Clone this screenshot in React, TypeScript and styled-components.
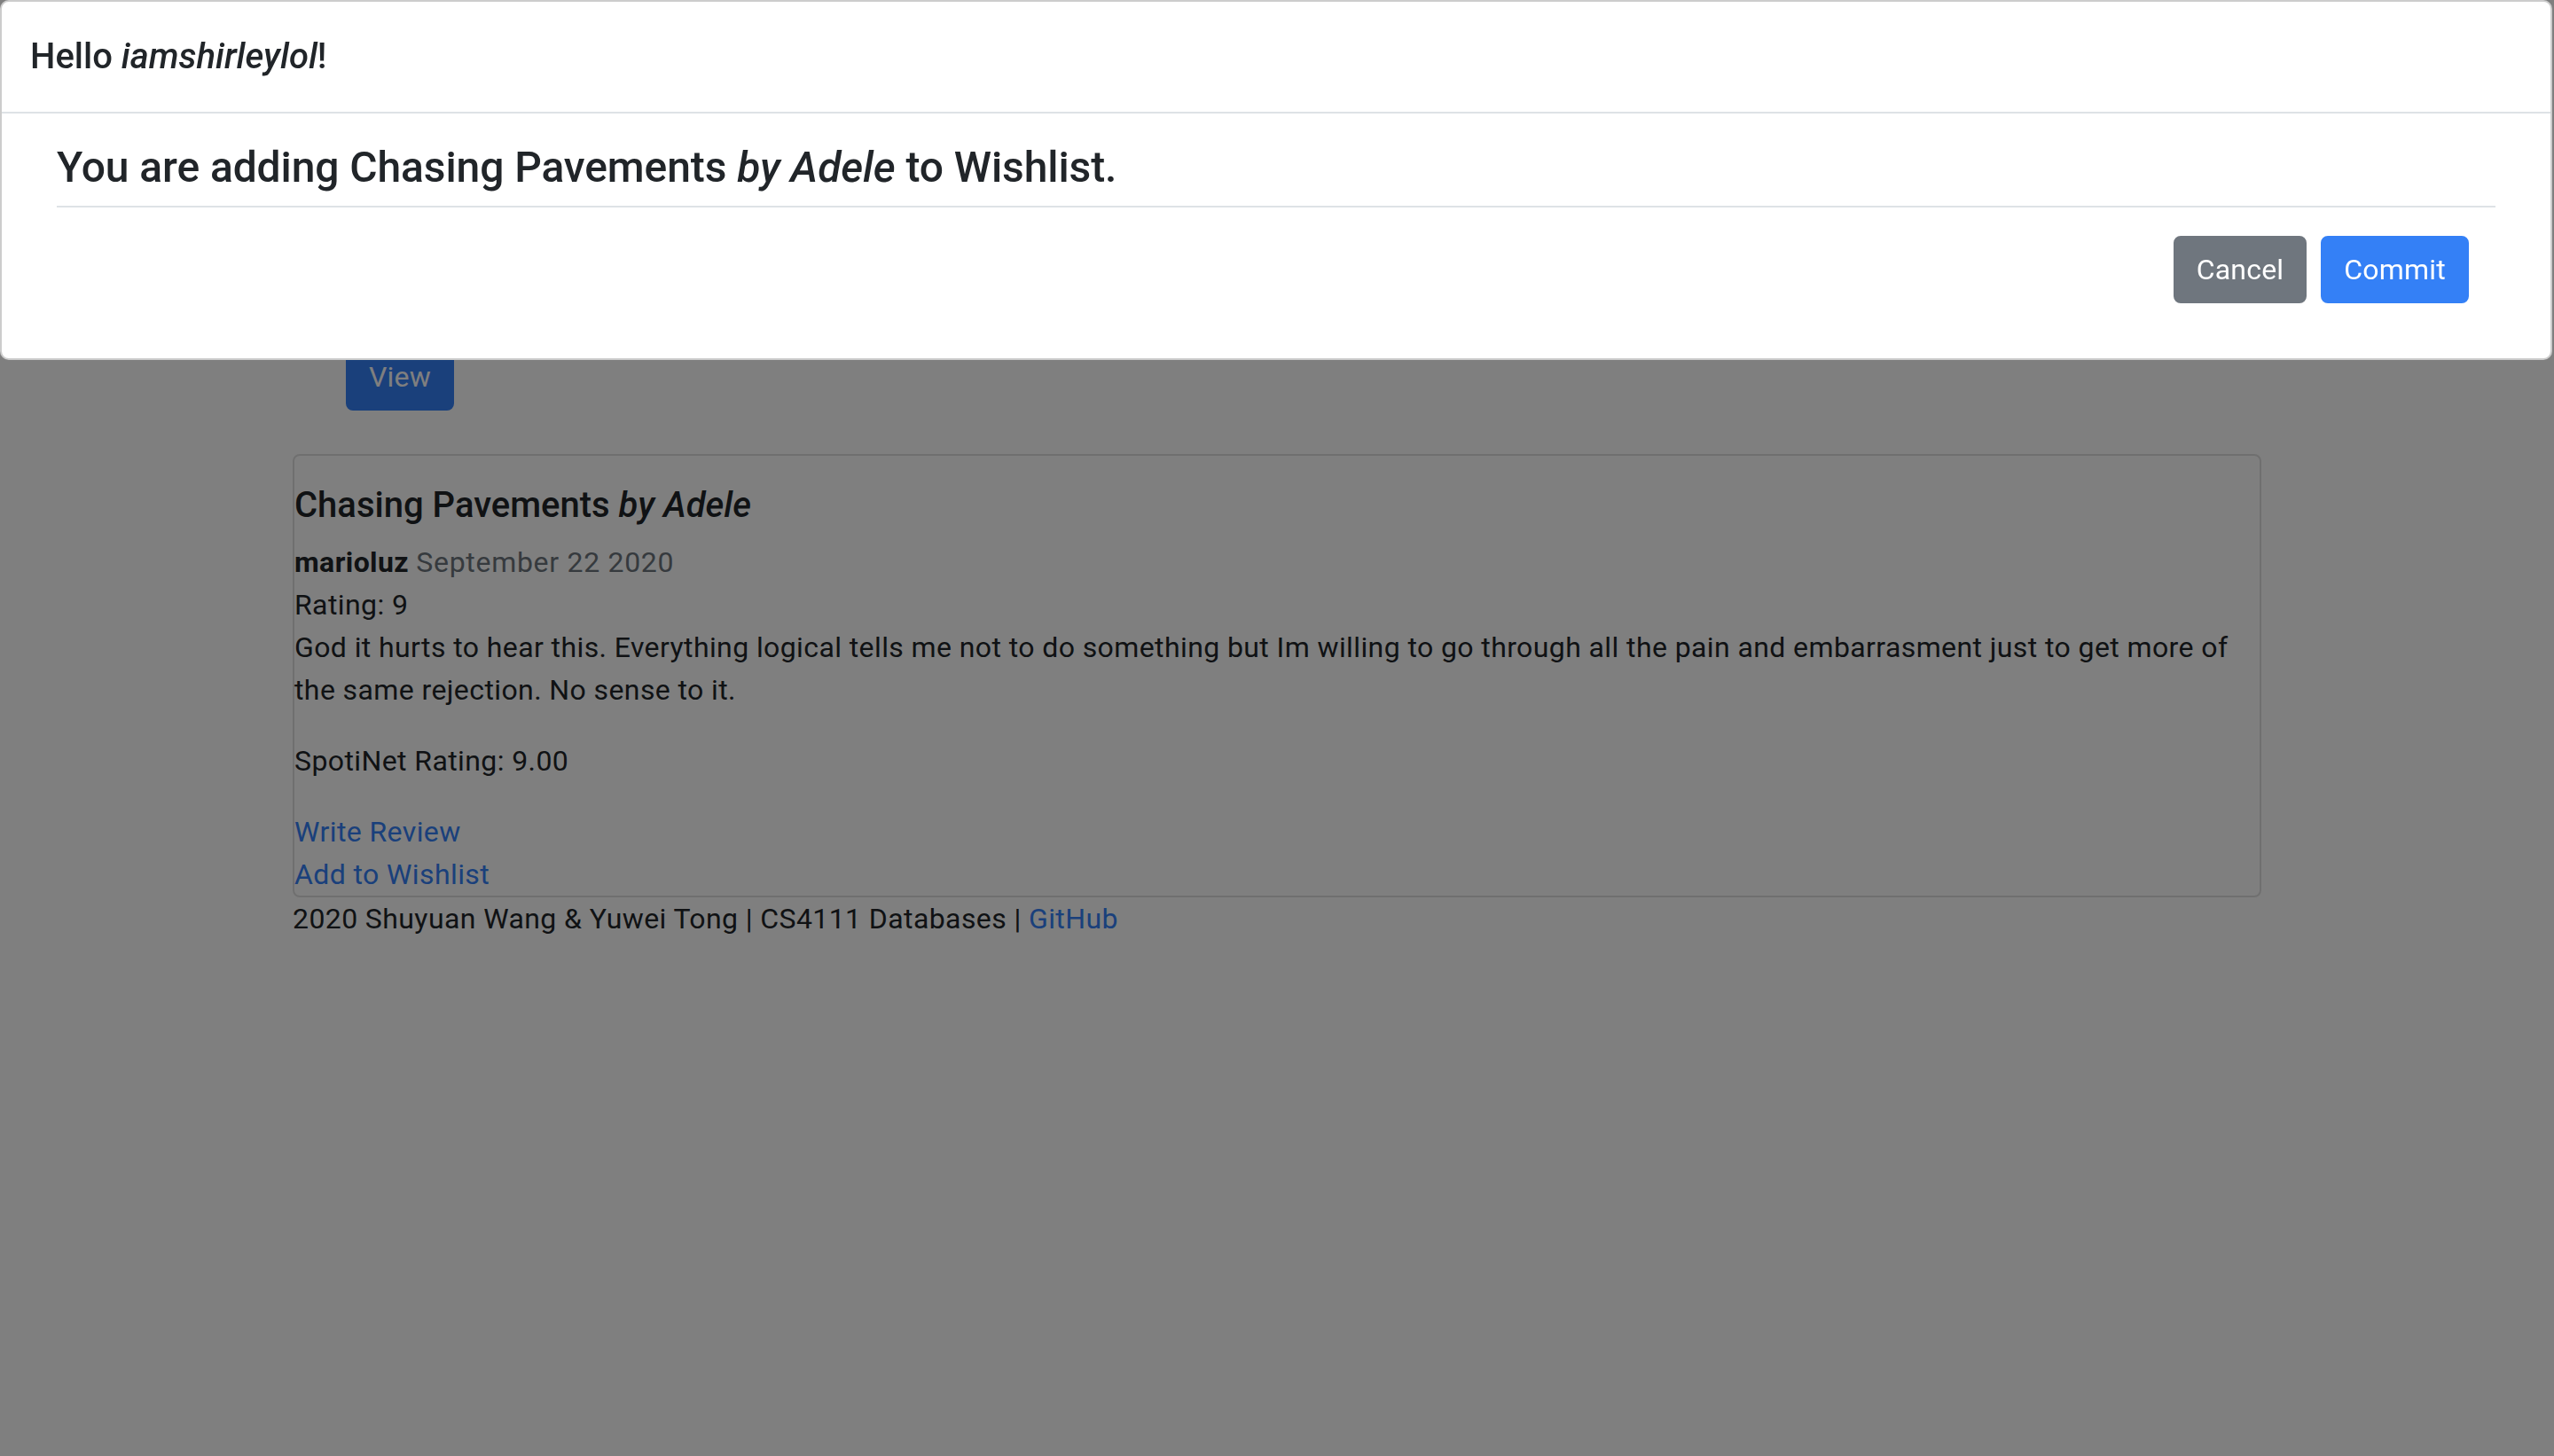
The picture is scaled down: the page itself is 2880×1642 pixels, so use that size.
import React from "react";
import styled, { createGlobalStyle } from "styled-components";

const GlobalStyle = createGlobalStyle`
  html, body {
    margin: 0;
    padding: 0;
    background: #ffffff;
  }
  body {
    font-family: Roboto, "Liberation Sans", sans-serif;
    font-size: 32px;
    line-height: 1.5;
    letter-spacing: 0.4px;
    color: #212529;
  }
  * { box-sizing: border-box; }
`;

const Page = styled.div`
  min-height: 1642px;
  padding-top: 387px;
`;

const Container = styled.div`
  max-width: 2280px;
  margin: 0 auto;
  padding: 0 30px;
`;

const ViewRow = styled.div`
  display: flex;
  padding-left: 60px;
  margin-bottom: 49px;
`;

const Button = styled.button<{ $variant: "primary" | "secondary" }>`
  font-family: inherit;
  font-size: 32px;
  line-height: 48px;
  letter-spacing: 0.2px;
  padding: 12px 24px;
  border-radius: 8px;
  border: 2px solid ${(p) => (p.$variant === "primary" ? "#3480f6" : "#6f767e")};
  background: ${(p) => (p.$variant === "primary" ? "#3480f6" : "#6f767e")};
  color: #ffffff;
  cursor: pointer;
`;

const Card = styled.div`
  display: flex;
  flex-direction: column;
  border: 2px solid rgba(0, 0, 0, 0.125);
  border-radius: 8px;
`;

const SongTitle = styled.h5`
  font-size: 40px;
  font-weight: 500;
  line-height: 1.2;
  letter-spacing: 0;
  margin: 32px 0 16px;
`;

const Line = styled.div``;

const Author = styled.b`
  font-weight: 700;
`;

const Muted = styled.span`
  color: #6c757d;
  letter-spacing: 0.7px;
`;

const Paragraph = styled.p`
  margin: 0 0 32px;
`;

const Link = styled.a`
  color: #3480f6;
  text-decoration: none;
`;

const LinkLine = styled(Link)`
  display: block;
`;

const Footer = styled.div``;

const Backdrop = styled.div`
  position: fixed;
  inset: 0;
  background: rgba(0, 0, 0, 0.5);
`;

const Modal = styled.div`
  position: fixed;
  top: 0;
  left: 0;
  right: 2px;
  background: #ffffff;
  border: 2px solid rgba(0, 0, 0, 0.2);
  border-radius: 10px;
  display: flex;
  flex-direction: column;
`;

const ModalHeader = styled.div`
  padding: 32px;
  border-bottom: 2px solid #dee2e6;
`;

const ModalTitle = styled.h5`
  margin: 0;
  font-size: 40px;
  font-weight: 500;
  line-height: 1.5;
  letter-spacing: 0;
`;

const ModalBody = styled.div`
  padding: 32px;
`;

const BodyInner = styled.div`
  padding: 0 30px;
`;

const Prompt = styled.h4`
  margin: 0;
  font-size: 48px;
  font-weight: 500;
  line-height: 1.2;
  letter-spacing: -0.1px;
  padding-bottom: 14px;
  border-bottom: 2px solid #dee2e6;
`;

const ButtonRow = styled.div`
  display: flex;
  justify-content: flex-end;
  gap: 16px;
  padding: 32px 60px 30px 0;
`;

export default function App() {
  return (
    <>
      <GlobalStyle />
      <Page>
        <Container>
          <ViewRow>
            <Button $variant="primary">View</Button>
          </ViewRow>
          <Card>
            <SongTitle>
              Chasing Pavements <i>by Adele</i>
            </SongTitle>
            <Line>
              <Author>marioluz</Author> <Muted>September 22 2020</Muted>
            </Line>
            <Line>Rating: 9</Line>
            <Paragraph>
              God it hurts to hear this. Everything logical tells me not to do something but Im
              willing to go through all the pain and embarrasment just to get more of the same
              rejection. No sense to it.
            </Paragraph>
            <Paragraph>SpotiNet Rating: 9.00</Paragraph>
            <LinkLine href="#">Write Review</LinkLine>
            <LinkLine href="#">Add to Wishlist</LinkLine>
          </Card>
          <Footer>
            2020 Shuyuan Wang &amp; Yuwei Tong | CS4111 Databases | <Link href="#">GitHub</Link>
          </Footer>
        </Container>
      </Page>
      <Backdrop />
      <Modal>
        <ModalHeader>
          <ModalTitle>
            Hello <i>iamshirleylol</i>!
          </ModalTitle>
        </ModalHeader>
        <ModalBody>
          <BodyInner>
            <Prompt>
              You are adding Chasing Pavements <i>by Adele</i> to Wishlist.
            </Prompt>
          </BodyInner>
          <ButtonRow>
            <Button $variant="secondary">Cancel</Button>
            <Button $variant="primary">Commit</Button>
          </ButtonRow>
        </ModalBody>
      </Modal>
    </>
  );
}
